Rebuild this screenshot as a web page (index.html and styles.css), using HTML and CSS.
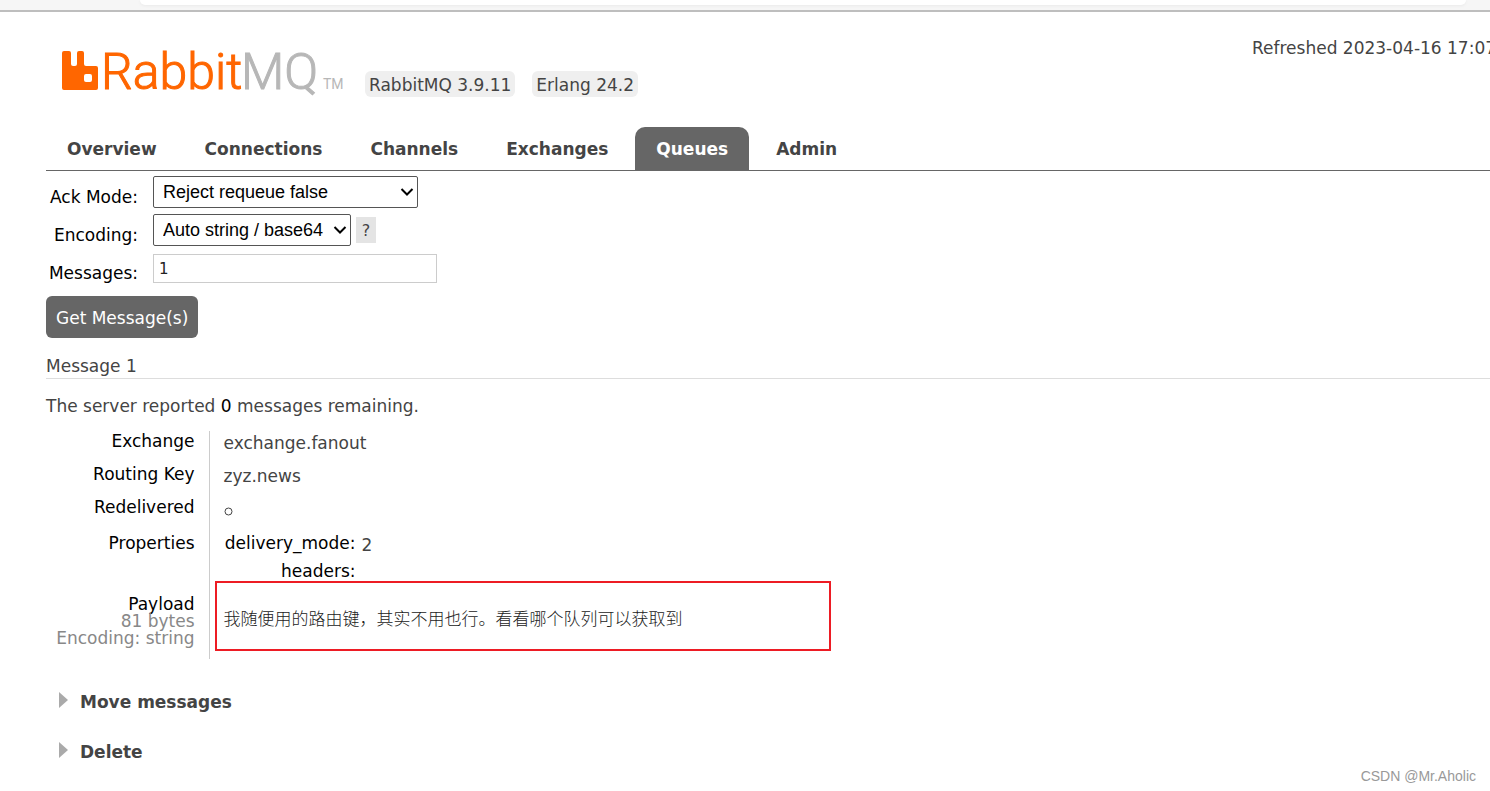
FILE: index.html
```
<!DOCTYPE html>
<html lang="en">
<head>
<meta charset="utf-8">
<title>RabbitMQ Management</title>
<link rel="stylesheet" href="styles.css">
</head>
<body>
<div class="browser-edge"><div class="toolbar"></div></div>
<header class="header">
  <a class="logo" href="#" aria-label="RabbitMQ">
    <svg width="284" height="42" viewBox="0 0 284 42">
      <path fill="#f60" d="M3 1h5q2 0 2 2v11q0 2 2 2h2q2 0 2-2V3q0-2 2-2h3q2 0 2 2v11q0 2 2 2h10q2 0 2 2v20q0 2-2 2H3q-2 0-2-2V3q0-2 2-2zM25 24q-2 0-2 2v4q0 2 2 2h4q2 0 2-2v-4q0-2-2-2z"/>
      <text class="logo-rabbit" x="40" y="39">Rabbit</text>
      <text class="logo-mq" x="180" y="39">MQ</text>
      <text class="logo-tm" x="262" y="39">TM</text>
    </svg>
  </a>
  <div class="versions"><span class="version">RabbitMQ 3.9.11</span><span class="version">Erlang 24.2</span></div>
  <div class="refreshed">Refreshed 2023-04-16 17:07</div>
</header>
<nav class="tabs">
  <a href="#">Overview</a><a href="#">Connections</a><a href="#">Channels</a><a href="#">Exchanges</a><a href="#" class="selected">Queues</a><a href="#">Admin</a>
</nav>
<main class="main">
  <form class="get-form">
    <div class="fields">
      <label for="ack">Ack Mode:</label>
      <div class="field"><select id="ack" class="select-wide"><option>Reject requeue false</option></select></div>
      <label for="enc">Encoding:</label>
      <div class="field"><select id="enc" class="select-small"><option>Auto string / base64</option></select><button type="button" class="help">?</button></div>
      <label for="count">Messages:</label>
      <div class="field"><input id="count" type="text" value="1"></div>
    </div>
    <button type="button" class="submit">Get Message(s)</button>
  </form>
  <h3 class="message-title">Message 1</h3>
  <p class="remaining">The server reported <b>0</b> messages remaining.</p>
  <table class="facts">
    <tr><th>Exchange</th><td>exchange.fanout</td></tr>
    <tr><th>Routing Key</th><td>zyz.news</td></tr>
    <tr><th>Redelivered</th><td><svg class="circle" width="9" height="9" viewBox="0 0 9 9" role="img" aria-label="no"><circle cx="4.5" cy="4.5" r="3.5" fill="none" stroke="#444"/></svg></td></tr>
    <tr class="properties"><th>Properties</th><td>
      <table class="mini">
        <tr><th>delivery_mode:</th><td>2</td></tr>
        <tr><th>headers:</th><td></td></tr>
      </table>
    </td></tr>
    <tr class="payload"><th>Payload<span>81 bytes</span><span>Encoding: string</span></th><td><div class="highlight"></div><pre lang="zh-CN">我随便用的路由键，其实不用也行。看看哪个队列可以获取到</pre></td></tr>
  </table>
  <section class="sections">
    <h2><svg width="10" height="16" viewBox="0 0 10 16"><path d="M0 0l9 8-9 8z" fill="#aaa"/></svg><a href="#">Move messages</a></h2>
    <h2><svg width="10" height="16" viewBox="0 0 10 16"><path d="M0 0l9 8-9 8z" fill="#aaa"/></svg><a href="#">Delete</a></h2>
  </section>
</main>
<div class="watermark">CSDN @Mr.Aholic</div>
</body>
</html>
```
FILE: styles.css
```
* { box-sizing: border-box; }
body {
  margin: 0;
  background: #fff;
  color: #444;
  font: 17px/20px Verdana, "DejaVu Sans", "Noto Sans CJK SC", sans-serif;
  overflow: hidden;
}
a { color: inherit; text-decoration: none; }
.browser-edge {
  height: 12px;
  padding: 0 24px 0 140px;
  background: #f6f6f6;
  border-bottom: 2px solid #bebebe;
}
.toolbar {
  height: 5px;
  background: #fff;
  border-radius: 0 0 14px 14px;
  box-shadow: 0 1px 3px #eaeaea;
}
.header { display: flex; padding: 26px 0 0 61px; height: 115px; }
.logo { display: block; height: 42px; margin-top: 12px; }
.logo svg { display: block; overflow: visible; }
.logo-rabbit, .logo-mq { font: 300 50px Roboto, sans-serif; stroke-width: 1px; }
.logo-rabbit { fill: #f60; stroke: #f60; }
.logo-mq { fill: #b7b7b7; stroke: #b7b7b7; }
.logo-tm { font: 14px Roboto, sans-serif; fill: #b7b7b7; }
.versions { display: flex; gap: 17px; margin: 33px 0 0 20px; align-items: flex-start; }
.version { padding: 4px 4px 2px; border-radius: 6px; background: #efefef; white-space: nowrap; }
.refreshed { width: 238px; margin-left: auto; white-space: nowrap; overflow: hidden; }
.tabs { display: flex; gap: 6px; margin-left: 46px; border-bottom: 1px solid #666; font-weight: bold; }
.tabs a { padding: 12px 21px 11px; border-radius: 10px 10px 0 0; }
.tabs .selected { background: #666; color: #fff; }
.main { padding-left: 46px; }
.fields { display: grid; grid-template-columns: 92px 1fr; column-gap: 15px; padding-top: 5px; }
.fields label { color: #000; text-align: right; padding-top: 11px; }
.field { height: 38px; display: flex; align-items: flex-start; }
.field select {
  height: 32px;
  border: 1px solid #555;
  border-radius: 2px;
  color: #000;
  font: 18px "Liberation Sans", Arial, sans-serif;
  padding: 0 0 0 9px;
  appearance: none;
  background: #fff url("data:image/svg+xml,%3Csvg xmlns='http://www.w3.org/2000/svg' width='14' height='10'%3E%3Cpath d='M1.5 2l5.500 5.500L12.500 2' fill='none' stroke='black' stroke-width='2'/%3E%3C/svg%3E") no-repeat right 3px center;
}
.select-wide { width: 265px; }
.select-small { width: 198px; }
.help { margin: 3px 0 0 5px; width: 20px; height: 26px; padding: 0; border: 0; background: #e4e4e4; color: #444; font: 16px "DejaVu Sans", sans-serif; }
.field input { width: 284px; height: 29px; margin-top: 2px; border: 1px solid #ccc; padding: 0 5px; color: #222; font: 15px "DejaVu Sans", sans-serif; }
.submit { display: block; margin-top: 6px; height: 42px; padding: 2px 10px 0; border: 0; border-radius: 6px; background: #666; color: #fff; font: 17px Verdana, "DejaVu Sans", sans-serif; }
.message-title { margin: 18px 0 0; padding-bottom: 2px; font-size: 17px; font-weight: normal; border-bottom: 1px solid #ddd; }
.remaining { margin: 17px 0 15px; }
.remaining b { color: #000; font-weight: normal; }
.facts { border-collapse: collapse; }
.facts th { color: #000; font-weight: normal; text-align: right; vertical-align: top; }
.facts td { vertical-align: top; }
.facts > tbody > tr > th { width: 163px; padding: 0 14px 13px 0; border-right: 1px solid #ccc; }
.facts > tbody > tr > td { position: relative; padding: 2px 14px 0; }
.circle { display: block; margin-top: 8px; }
.facts > tbody > .properties > th { padding-top: 3px; }
.facts > tbody > .properties > td { padding-top: 3px; }
.mini { border-collapse: collapse; }
.mini th { width: 132px; height: 28px; padding: 0; }
.mini td { padding: 2px 6px 0; }
.facts > tbody > .payload > th { padding-top: 7px; padding-bottom: 12px; line-height: 17px; }
.payload span { display: block; color: #888; }
.payload pre { margin: 17px 0 0; color: #222; font: 300 17px/20px "Noto Sans CJK SC", sans-serif; }
.highlight { position: absolute; left: 5px; top: -8px; width: 616px; height: 70px; border: 2px solid #ed1c24; }
.sections { padding: 33px 0 0 13px; }
.sections h2 { display: flex; gap: 11px; margin: 0 0 30px; font-size: 17px; }
.watermark { position: absolute; right: 14px; bottom: 5px; color: #999; font: 14px/20px "Liberation Sans", Arial, sans-serif; }
```
